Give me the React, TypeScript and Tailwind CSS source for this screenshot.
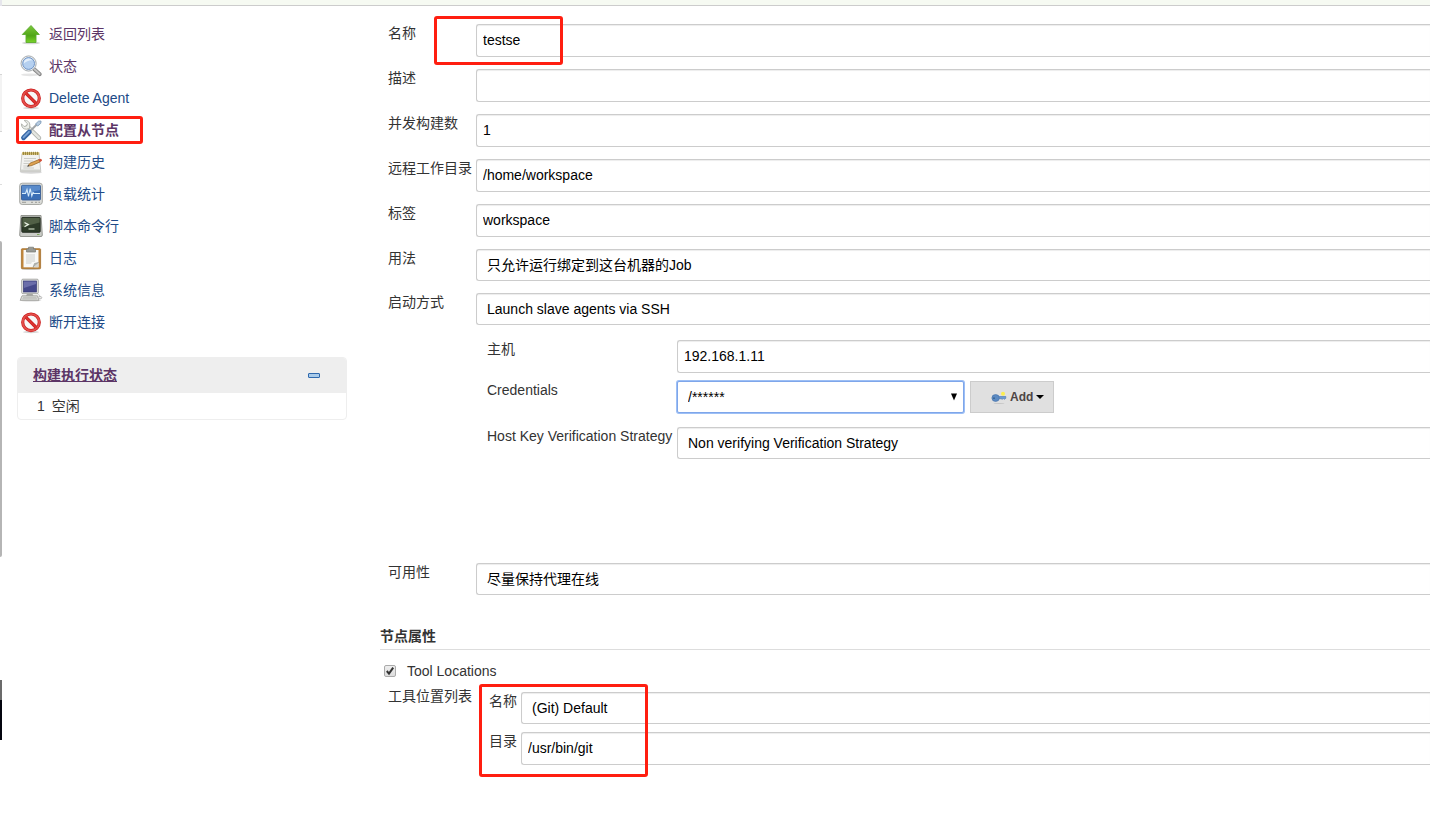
import { useId, type ReactNode } from 'react';

const FONT = "font-['Liberation_Sans','Noto_Sans_CJK_SC',sans-serif]";

function Icon({ children }: { children: ReactNode }) {
  return (
    <svg viewBox="0 0 24 24" className="size-6 shrink-0" aria-hidden="true">
      {children}
    </svg>
  );
}

function UpIcon() {
  return (
    <Icon>
      <defs>
        <linearGradient id="up-fill" x1="0" y1="0" x2="0" y2="1">
          <stop offset="0" stopColor="#7cc83c" />
          <stop offset="0.6" stopColor="#4fa516" />
          <stop offset="1" stopColor="#7ad32a" />
        </linearGradient>
      </defs>
      <ellipse cx="12" cy="21" rx="9" ry="1.3" fill="#000" opacity="0.16" />
      <path d="M12 3.500 20.300 12.500H17V20.500H7V12.500H3.300Z" fill="url(#up-fill)" stroke="#5cab2e" strokeWidth="0.900" strokeLinejoin="round" />
    </Icon>
  );
}

function SearchIcon() {
  return (
    <Icon>
      <ellipse cx="11" cy="20.800" rx="9" ry="1.400" fill="#000" opacity="0.1" />
      <path d="m15.500 15.500 5.300 4.700" stroke="#858585" strokeWidth="3.800" strokeLinecap="round" />
      <path d="m15.500 15.300 5.100 4.600" stroke="#c4c4c4" strokeWidth="2" strokeLinecap="round" />
      <circle cx="9.600" cy="9.500" r="7.600" fill="#eceef0" stroke="#9da3a6" strokeWidth="0.900" />
      <circle cx="9.600" cy="9.500" r="5.900" fill="#b5d0f0" stroke="#6f94c6" strokeWidth="1" />
      <path d="M4.800 9.500A4.900 4.900 0 0 1 13.400 6.200C10 6 7 7.700 4.800 9.500Z" fill="#e4effb" />
    </Icon>
  );
}

function StopIcon() {
  return (
    <Icon>
      <ellipse cx="12" cy="22" rx="8" ry="1.200" fill="#000" opacity="0.160" />
      <circle cx="12" cy="12.300" r="8.300" fill="#f7f7f7" stroke="#cc1f1f" strokeWidth="3.200" />
      <path d="m6.300 6.600 11.400 11.400" stroke="#cc1f1f" strokeWidth="3.200" />
      <circle cx="12" cy="12.300" r="8.300" fill="none" stroke="#e4514d" strokeWidth="1.700" />
      <path d="m6.300 6.600 11.400 11.400" stroke="#dd3531" strokeWidth="1.700" />
    </Icon>
  );
}

function ToolsIcon() {
  return (
    <Icon>
      <path d="m8.500 8.500 11.700 11.500" stroke="#a5a8a2" strokeWidth="4" strokeLinecap="round" />
      <path d="m8.500 8.500 11.700 11.500" stroke="#e3e5e0" strokeWidth="2.600" strokeLinecap="round" />
      <path d="M5.200 2.500 8.500 5.700 7.500 8 5 8.500 2.500 5.800C2.200 9 4.200 11.300 7.500 11.200L10.500 10.500 10.800 7C10.800 4 8.500 2 5.200 2.500Z" fill="#eceeea" stroke="#a9aca6" strokeWidth="0.900" strokeLinejoin="round" />
      <path d="m11.500 12.800 6.500-6.500" stroke="#a1a5a8" strokeWidth="2" />
      <path d="M16.500 6 19.500 3.200 22 3 21.800 5.300 18.800 8Z" fill="#b7cbe0" stroke="#7f9cba" strokeWidth="0.900" />
      <path d="m4.500 19.800 5.800-5.800" stroke="#3565a4" strokeWidth="4.800" strokeLinecap="round" />
      <path d="m4.500 19.300 5.500-5.500" stroke="#79a3d6" strokeWidth="1.800" strokeLinecap="round" />
    </Icon>
  );
}

function NotepadIcon() {
  return (
    <Icon>
      <ellipse cx="12" cy="22.500" rx="11" ry="1.200" fill="#000" opacity="0.160" />
      <path d="M3 3.500H20L21.800 21.500H1.300Z" fill="#f2f2f0" stroke="#b9bab6" strokeWidth="0.800" />
      <path d="M1.500 19.500H21.600V21.700H1.300Z" fill="#d0d1cd" />
      <path d="M3 2.200H20.300V4.800H3Z" fill="#cdb668" />
      <path d="M4.500 1.800v3.200M6.500 1.800v3.200M8.500 1.800v3.200M10.500 1.800v3.200M12.500 1.800v3.200M14.500 1.800v3.200M16.500 1.800v3.200M18.500 1.800v3.200" stroke="#8b7a35" strokeWidth="0.800" />
      <path d="M5 8.500H17M5 11H14M4.500 13.500H10M4.300 16H8M4.300 18H15" stroke="#c6c7c3" strokeWidth="0.900" />
      <path d="m9 15.800 2-2.600 9-3.600 1.100 2.300-9 3.900Z" fill="#dfa352" stroke="#98682b" strokeWidth="0.800" />
      <path d="m19.400 9.600 1.900-.9 1.500.8.200 1.200-2 1.400Z" fill="#d4503a" />
      <path d="m8 16.800 1.200-2 1.300 1.400Z" fill="#444" />
    </Icon>
  );
}

function MonitorIcon() {
  return (
    <Icon>
      <rect x="0.700" y="1.200" width="22.600" height="21.300" rx="2.500" fill="#dcddd9" stroke="#a1a39e" strokeWidth="0.900" />
      <rect x="2.500" y="3.300" width="19" height="14.700" rx="1" fill="#3a6fb6" stroke="#3a5f95" strokeWidth="0.900" />
      <path d="M3 3.800H21V8L3 12Z" fill="#5a8bcb" />
      <path d="M3 11.500H6.500L8 7.500 9.500 14.500 11.200 6.500 12.800 14 14 10.500 15 11.500H21" fill="none" stroke="#d7ecfb" strokeWidth="1.100" />
      <path d="M3 20.300H7M12 20.300H14M16 20.300H18M19.500 20.300H21" stroke="#9a9c97" strokeWidth="1" />
    </Icon>
  );
}

function TerminalIcon() {
  return (
    <Icon>
      <path d="M2 1.500H22L23.300 21Q23.300 22.500 22 22.500H2Q.7 22.500.7 21Z" fill="#c9cbc6" stroke="#8b8d88" strokeWidth="0.900" />
      <rect x="2.800" y="3.300" width="18.400" height="15" rx="0.800" fill="#2d3b28" stroke="#20271d" strokeWidth="0.900" />
      <path d="M3.400 3.900H20.600V8.500L3.400 13Z" fill="#516046" />
      <path d="m5.500 8.500 3.800 2.100-3.800 2.100" fill="none" stroke="#e8f0e2" strokeWidth="1.300" />
      <path d="M9.500 15H15.500" stroke="#c8d5be" strokeWidth="1.200" />
      <path d="M18 20.500H20.500" stroke="#7da85b" strokeWidth="1" />
    </Icon>
  );
}

function ClipboardIcon() {
  return (
    <Icon>
      <ellipse cx="12" cy="23" rx="10" ry="0.900" fill="#000" opacity="0.180" />
      <rect x="2.400" y="2.700" width="19.200" height="20" rx="0.800" fill="#c1853a" stroke="#a3702c" strokeWidth="0.800" />
      <path d="M4.500 4H19.500V21.300H4.500Z" fill="#f8f8f7" />
      <path d="M7 8H16V16H13L12 18H7Z" fill="#e2e3e1" />
      <path d="M14 21.300 15.500 17.500 19.500 16.500Z" fill="#b8bab5" stroke="#8f918c" strokeWidth="0.600" />
      <path d="m15 21.300 4.500-4.500V21.300Z" fill="#d5d6d3" />
      <path d="M7.500 3H9.500V1.200H14.500V3H16.500V6H7.500Z" fill="#989a95" stroke="#777973" strokeWidth="0.700" />
    </Icon>
  );
}

function ComputerIcon() {
  return (
    <Icon>
      <ellipse cx="11.500" cy="22.600" rx="11" ry="0.900" fill="#000" opacity="0.160" />
      <rect x="2.700" y="1.200" width="16.600" height="14.500" rx="1.200" fill="#e4e5e2" stroke="#a1a39e" strokeWidth="0.900" />
      <rect x="4.500" y="3" width="13" height="11" fill="#45498b" stroke="#383b74" strokeWidth="0.700" />
      <path d="M4.900 3.400H17.100V6L4.900 10Z" fill="#6b6eaa" />
      <path d="M8 15.700H13.500L14.500 18H7Z" fill="#a5a6a2" />
      <path d="M3 17.800H18.500L20 22.300H1.200Z" fill="#dddedb" stroke="#a1a39e" strokeWidth="0.900" />
      <path d="M4 19.300H17.500M3.300 20.800H18" stroke="#b2b4af" strokeWidth="0.800" />
      <path d="M18.800 16.500q2.500 0 2 2.500" fill="none" stroke="#bbb" strokeWidth="0.800" />
      <ellipse cx="21" cy="19.700" rx="1.800" ry="1.200" fill="#efefed" stroke="#a5a5a5" strokeWidth="0.700" />
    </Icon>
  );
}

function KeyIcon() {
  return (
    <svg viewBox="0 0 16 16" className="size-4 shrink-0" aria-hidden="true">
      <ellipse cx="8" cy="14.500" rx="5.500" ry="0.600" fill="#000" opacity="0.120" />
      <path d="M7 7.500H14.800V9.300L13.500 10.300 12.300 9.500 11.200 10.300 10 9.700H7Z" fill="#6c9bd2" stroke="#4a76ae" strokeWidth="0.600" />
      <ellipse cx="4.600" cy="9" rx="3.700" ry="3.400" fill="#5b8ac2" stroke="#4a76ae" strokeWidth="0.700" />
      <circle cx="3" cy="9.200" r="0.900" fill="#34608f" />
      <circle cx="12" cy="4.800" r="2" fill="#fcee4f" />
    </svg>
  );
}

const menu = [
  { label: '返回列表', icon: <UpIcon />, color: 'text-[#5c3566]' },
  { label: '状态', icon: <SearchIcon />, color: 'text-[#5c3566]' },
  { label: 'Delete Agent', icon: <StopIcon />, color: 'text-[#204a87]' },
  { label: '配置从节点', icon: <ToolsIcon />, color: 'font-bold text-[#5c3566]', marked: true },
  { label: '构建历史', icon: <NotepadIcon />, color: 'text-[#204a87]' },
  { label: '负载统计', icon: <MonitorIcon />, color: 'text-[#204a87]' },
  { label: '脚本命令行', icon: <TerminalIcon />, color: 'text-[#204a87]' },
  { label: '日志', icon: <ClipboardIcon />, color: 'text-[#204a87]' },
  { label: '系统信息', icon: <ComputerIcon />, color: 'text-[#204a87]' },
  { label: '断开连接', icon: <StopIcon />, color: 'text-[#204a87]' },
];

const FIELD =
  'block w-full min-w-0 flex-1 appearance-none rounded-l-[3px] border border-r-0 border-[#ccc] bg-white text-sm text-black shadow-[inset_0_1px_1px_rgba(0,0,0,0.075)] outline-none';

type RowProps = { label: string; value: string; labelWidth?: string; select?: boolean };

function Row({ label, value, labelWidth = 'w-[88px]', select }: RowProps) {
  const id = useId();
  return (
    <div className="flex items-start">
      <label htmlFor={id} className={`${labelWidth} shrink-0 whitespace-nowrap leading-[18px]`}>
        {label}
      </label>
      {select ? (
        <select id={id} className={`${FIELD} h-8 px-2.5`}>
          <option>{value}</option>
        </select>
      ) : (
        <input id={id} type="text" defaultValue={value} className={`${FIELD} h-[33px] px-1.5 pb-0.5`} />
      )}
    </div>
  );
}

function EdgeStrip() {
  return (
    <div className="flex w-0.5 shrink-0 flex-col" aria-hidden="true">
      <div className="h-1.5 bg-[#e6e6ec]" />
      <div className="mt-[68px] h-[58px] border-y border-[#d5d5d5] bg-[#f3f3f3]" />
      <div className="mt-[52px] h-px bg-[#ddd]" />
      <div className="mt-14 h-[316px] rounded-r-[2px] bg-[#b5b5b5]" />
      <div className="mt-[123px] h-5 bg-[#6b6b6b]" />
      <div className="h-10 bg-[#04050f]" />
    </div>
  );
}

function Sidebar() {
  return (
    <aside className="w-[330px] shrink-0 pt-3">
      <nav>
        <ul>
          {menu.map((item) => (
            <li key={item.label} className="relative">
              <a href="#" className={`flex h-8 items-center gap-1.5 pl-0.5 ${item.color}`}>
                {item.icon}
                {item.label}
              </a>
              {item.marked && (
                <span className="pointer-events-none absolute top-0.5 -left-px h-7 w-[127px] rounded-[3px] border-[3px] border-[#ff1e10]" />
              )}
            </li>
          ))}
        </ul>
      </nav>
      <section className="mt-[19px] overflow-hidden rounded border border-[#eee]">
        <div className="flex h-[35px] items-center justify-between bg-[#eee] pr-[26px] pb-0.5 pl-[15px]">
          <a href="#" className="font-bold text-[#5c3566] underline">
            构建执行状态
          </a>
          <button type="button" aria-label="折叠">
            <svg viewBox="0 0 12 6" className="h-1.5 w-3">
              <rect x="0.5" y="1.5" width="11" height="4" rx="0.500" fill="#a9cbea" stroke="#2f69ad" />
            </svg>
          </button>
        </div>
        <div className="flex h-[26px] items-center gap-[7px] pl-[19px]">
          <span>1</span>
          <span>空闲</span>
        </div>
      </section>
    </aside>
  );
}

function Credentials() {
  return (
    <div className="mt-2 flex items-start">
      <label htmlFor="credentials" className="w-[190px] shrink-0 leading-[18px]">
        Credentials
      </label>
      <div className="relative w-[287px]">
        <select
          id="credentials"
          className="block h-8 w-full appearance-none rounded-[2px] border border-[#7ea6ea] bg-white px-2.5 text-sm text-black ring-1 ring-[#9dbff5] outline-none"
        >
          <option>/******</option>
        </select>
        <svg viewBox="0 0 8 8" className="pointer-events-none absolute top-3 right-1.5 size-2" aria-hidden="true">
          <path d="M1 0.500H7L4 7.500Z" fill="#000" />
        </svg>
      </div>
      <button
        type="button"
        className="ml-1.5 flex h-8 items-center gap-[3px] border border-[#ccc] bg-[#e0e0e0] pr-[9px] pl-5 text-xs font-bold text-[#4d4545]"
      >
        <KeyIcon />
        Add
        <svg viewBox="0 0 8 4" className="h-1 w-2" aria-hidden="true">
          <path d="M0 0H8L4 4Z" fill="#000" />
        </svg>
      </button>
    </div>
  );
}

export default function App() {
  return (
    <div className={`flex min-h-screen overflow-x-hidden bg-white text-sm text-[#333] ${FONT}`}>
      <EdgeStrip />
      <div className="flex min-w-0 flex-1 flex-col">
        <header className="h-1.5 border-b border-[#ccc] bg-[#f6faf2]" />
        <div className="flex flex-1 gap-[33px] pl-[15px]">
          <Sidebar />
          <main className="min-w-0 flex-1 pt-[18px]">
            <form>
              <div className="relative flex flex-col gap-3 pl-2">
                <Row label="名称" value="testse" />
                <Row label="描述" value="" />
                <Row label="并发构建数" value="1" />
                <Row label="远程工作目录" value="/home/workspace" />
                <Row label="标签" value="workspace" />
                <Row label="用法" value="只允许运行绑定到这台机器的Job" select />
                <Row label="启动方式" value="Launch slave agents via SSH" select />
                <span className="pointer-events-none absolute -top-2 left-[54px] h-[49px] w-[129px] rounded-[3px] border-[3px] border-[#ff1e10]" />
              </div>
              <div className="mt-[15px] pl-[107px]">
                <Row label="主机" value="192.168.1.11" labelWidth="w-[190px]" />
                <Credentials />
                <div className="mt-3.5">
                  <Row label="Host Key Verification Strategy" value="Non verifying Verification Strategy" labelWidth="w-[190px]" select />
                </div>
              </div>
              <div className="mt-[104px] pl-2">
                <Row label="可用性" value="尽量保持代理在线" select />
              </div>
              <h2 className="mt-[31px] border-b border-[#ddd] pb-[3px] leading-5 font-bold">节点属性</h2>
              <label className="mt-[11px] flex h-5 items-center gap-[11px] pl-1">
                <span className="relative size-3">
                  <input
                    type="checkbox"
                    defaultChecked
                    className="peer block size-3 appearance-none rounded-[2px] border border-[#aaa] bg-linear-to-b from-[#eee] to-[#ddd]"
                  />
                  <svg viewBox="0 0 12 12" className="pointer-events-none absolute inset-0 hidden size-3 peer-checked:block" aria-hidden="true">
                    <path d="m2.800 6 2.200 2.600 4.200-6" fill="none" stroke="#333" strokeWidth="2" />
                  </svg>
                </span>
                Tool Locations
              </label>
              <div className="mt-1.5 flex items-start pl-2">
                <span className="w-[88px] shrink-0 leading-[18px]">工具位置列表</span>
                <div className="relative flex min-w-0 flex-1 flex-col gap-2 pt-[5px] pl-[13px]">
                  <Row label="名称" value="(Git) Default" labelWidth="w-8" select />
                  <Row label="目录" value="/usr/bin/git" labelWidth="w-8" />
                  <span className="pointer-events-none absolute -top-[3px] left-[3px] h-[93px] w-[169px] rounded-[3px] border-[3px] border-[#ff1e10]" />
                </div>
              </div>
            </form>
          </main>
        </div>
      </div>
    </div>
  );
}
